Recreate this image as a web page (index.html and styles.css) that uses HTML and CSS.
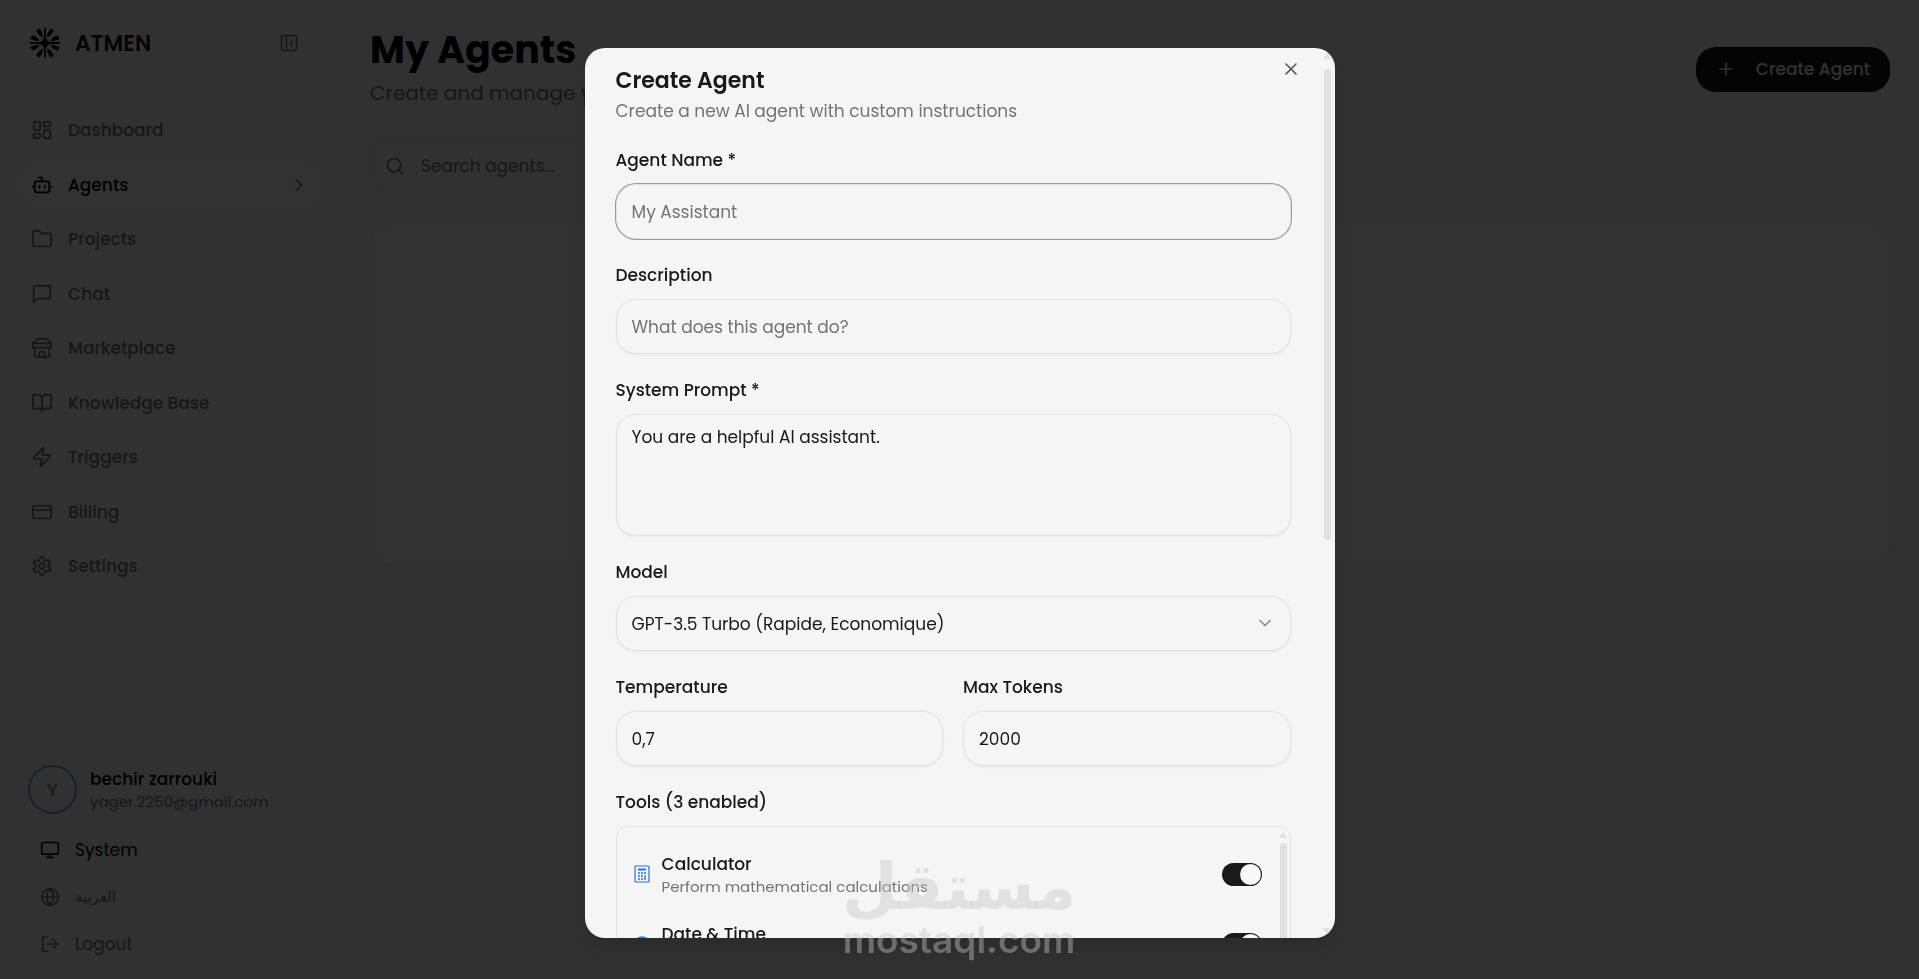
FILE: index.html
```
<!DOCTYPE html>
<html lang="en">
<head>
<meta charset="UTF-8">
<meta name="viewport" content="width=device-width, initial-scale=1.0">
<title>My Agents - ATMEN</title>
<link rel="stylesheet" href="styles.css">
</head>
<body>

<div class="app">
  <aside class="sidebar">
    <div class="sidebar-header">
      <svg class="logo" viewBox="0 0 30 30" fill="none" stroke="currentColor">
        <path d="M15 0v30M0 15h30" stroke-width="1.8"/>
        <path d="M15 8l2.500 4.500L22 15l-4.500 2.500L15 22l-2.500-4.500L8 15l4.500-2.500z" fill="currentColor" stroke="none"/>
        <g fill="currentColor" stroke="none">
          <path d="M16.800 9.500C17 6 18.500 3 20.500 0.500L24 2C22.500 5 20.500 8.500 16.800 9.500z"/>
          <path d="M20.500 13.200C24 13 27 12 29.700 11L28 7.500C25 8 21.500 9.500 20.500 13.200z"/>
          <path d="M13.200 9.500C13 6 11.500 3 9.500 0.500L6 2C7.500 5 9.500 8.500 13.200 9.500z"/>
          <path d="M9.500 13.200C6 13 3 12 0.300 11L2 7.500C5 8 8.500 9.500 9.500 13.200z"/>
          <path d="M16.800 20.500C17 24 18.500 27 20.500 29.500L24 28C22.500 25 20.500 21.500 16.800 20.500z"/>
          <path d="M20.500 16.800C24 17 27 18 29.700 19L28 22.500C25 22 21.500 20.500 20.500 16.800z"/>
          <path d="M13.200 20.500C13 24 11.500 27 9.500 29.500L6 28C7.500 25 9.500 21.500 13.200 20.500z"/>
          <path d="M9.500 16.800C6 17 3 18 0.300 19L2 22.500C5 22 8.500 20.500 9.500 16.800z"/>
        </g>
      </svg>
      <span class="brand">ATMEN</span>
      <button class="icon-btn" aria-label="Collapse sidebar">
        <svg class="icon icon-md" viewBox="0 0 24 24"><rect x="3" y="3" width="18" height="18" rx="2"/><path d="M9 3v18M16 15l-3-3 3-3"/></svg>
      </button>
    </div>

    <nav class="nav">
      <a class="nav-item" href="#"><svg class="icon" viewBox="0 0 24 24"><rect x="3" y="3" width="7" height="9" rx="1"/><rect x="14" y="3" width="7" height="5" rx="1"/><rect x="14" y="12" width="7" height="9" rx="1"/><rect x="3" y="16" width="7" height="5" rx="1"/></svg>Dashboard</a>
      <a class="nav-item active" href="#"><svg class="icon" viewBox="0 0 24 24"><path d="M12 8V4H8"/><rect x="4" y="8" width="16" height="12" rx="2"/><path d="M2 14h2M20 14h2M15 13v2M9 13v2"/></svg>Agents<svg class="icon icon-md chevron" viewBox="0 0 24 24"><path d="M9 18l6-6-6-6"/></svg></a>
      <a class="nav-item" href="#"><svg class="icon" viewBox="0 0 24 24"><path d="M20 20a2 2 0 0 0 2-2V8a2 2 0 0 0-2-2h-7.900a2 2 0 0 1-1.690-.9L9.600 3.900A2 2 0 0 0 7.930 3H4a2 2 0 0 0-2 2v13a2 2 0 0 0 2 2Z"/></svg>Projects</a>
      <a class="nav-item" href="#"><svg class="icon" viewBox="0 0 24 24"><path d="M21 15a2 2 0 0 1-2 2H7l-4 4V5a2 2 0 0 1 2-2h14a2 2 0 0 1 2 2z"/></svg>Chat</a>
      <a class="nav-item" href="#"><svg class="icon" viewBox="0 0 24 24"><path d="m2 7 4.410-4.410A2 2 0 0 1 7.830 2h8.340a2 2 0 0 1 1.420.590L22 7"/><path d="M4 12v8a2 2 0 0 0 2 2h12a2 2 0 0 0 2-2v-8"/><path d="M15 22v-4a2 2 0 0 0-2-2h-2a2 2 0 0 0-2 2v4"/><path d="M2 7h20"/><path d="M22 7v3a2 2 0 0 1-2 2 2.700 2.700 0 0 1-1.590-.630.700.700 0 0 0-.820 0A2.700 2.700 0 0 1 16 12a2.700 2.700 0 0 1-1.590-.630.700.700 0 0 0-.820 0A2.700 2.700 0 0 1 12 12a2.700 2.700 0 0 1-1.590-.630.700.700 0 0 0-.820 0A2.700 2.700 0 0 1 8 12a2.700 2.700 0 0 1-1.590-.630.700.700 0 0 0-.820 0A2.700 2.700 0 0 1 4 12a2 2 0 0 1-2-2V7"/></svg>Marketplace</a>
      <a class="nav-item" href="#"><svg class="icon" viewBox="0 0 24 24"><path d="M12 7v14"/><path d="M3 18a1 1 0 0 1-1-1V4a1 1 0 0 1 1-1h5a4 4 0 0 1 4 4 4 4 0 0 1 4-4h5a1 1 0 0 1 1 1v13a1 1 0 0 1-1 1h-6a3 3 0 0 0-3 3 3 3 0 0 0-3-3z"/></svg>Knowledge Base</a>
      <a class="nav-item" href="#"><svg class="icon" viewBox="0 0 24 24"><path d="M4 14a1 1 0 0 1-.780-1.630l9.900-10.200a.5.5 0 0 1 .860.460l-1.920 6.020A1 1 0 0 0 13 10h7a1 1 0 0 1 .780 1.630l-9.900 10.200a.5.5 0 0 1-.860-.460l1.920-6.020A1 1 0 0 0 11 14z"/></svg>Triggers</a>
      <a class="nav-item" href="#"><svg class="icon" viewBox="0 0 24 24"><rect x="2" y="5" width="20" height="14" rx="2"/><path d="M2 10h20"/></svg>Billing</a>
      <a class="nav-item" href="#"><svg class="icon" viewBox="0 0 24 24"><path d="M12.220 2h-.440a2 2 0 0 0-2 2v.180a2 2 0 0 1-1 1.730l-.430.250a2 2 0 0 1-2 0l-.150-.080a2 2 0 0 0-2.730.730l-.220.380a2 2 0 0 0 .730 2.730l.150.100a2 2 0 0 1 1 1.720v.510a2 2 0 0 1-1 1.740l-.150.090a2 2 0 0 0-.730 2.730l.220.380a2 2 0 0 0 2.730.730l.150-.080a2 2 0 0 1 2 0l.430.250a2 2 0 0 1 1 1.730V20a2 2 0 0 0 2 2h.440a2 2 0 0 0 2-2v-.180a2 2 0 0 1 1-1.730l.430-.250a2 2 0 0 1 2 0l.150.080a2 2 0 0 0 2.730-.730l.220-.390a2 2 0 0 0-.730-2.730l-.150-.080a2 2 0 0 1-1-1.740v-.5a2 2 0 0 1 1-1.740l.150-.090a2 2 0 0 0 .730-2.730l-.220-.380a2 2 0 0 0-2.730-.730l-.150.080a2 2 0 0 1-2 0l-.430-.250a2 2 0 0 1-1-1.730V4a2 2 0 0 0-2-2z"/><circle cx="12" cy="12" r="3"/></svg>Settings</a>
    </nav>

    <div class="sidebar-footer">
      <div class="user">
        <span class="avatar">Y</span>
        <div>
          <div class="user-name">bechir zarrouki</div>
          <div class="user-email">yager.2250@gmail.com</div>
        </div>
      </div>
      <button class="foot-item strong"><svg class="icon icon-md" viewBox="0 0 24 24"><rect x="2" y="3" width="20" height="14" rx="2"/><path d="M8 21h8M12 17v4"/></svg>System</button>
      <button class="foot-item arabic" lang="ar"><svg class="icon icon-md" viewBox="0 0 24 24"><circle cx="12" cy="12" r="10"/><path d="M12 2a14.500 14.500 0 0 0 0 20 14.500 14.500 0 0 0 0-20M2 12h20"/></svg>العربية</button>
      <button class="foot-item"><svg class="icon icon-md" viewBox="0 0 24 24"><path d="M9 21H5a2 2 0 0 1-2-2V5a2 2 0 0 1 2-2h4M16 17l5-5-5-5M21 12H9"/></svg>Logout</button>
    </div>
  </aside>

  <main class="main">
    <header class="page-header">
      <div>
        <h1>My Agents</h1>
        <p class="subtitle">Create and manage your AI agents</p>
      </div>
      <button class="btn-primary"><svg class="icon icon-md" viewBox="0 0 24 24"><path d="M5 12h14M12 5v14"/></svg>Create Agent</button>
    </header>
    <label class="search">
      <svg class="icon icon-md" viewBox="0 0 24 24"><circle cx="11" cy="11" r="8"/><path d="m21 21-4.300-4.300"/></svg>
      <input type="search" placeholder="Search agents..." aria-label="Search agents">
    </label>
    <section class="card"></section>
  </main>
</div>

<div class="overlay">
  <div class="modal" role="dialog" aria-modal="true" aria-labelledby="modal-title">
    <form class="modal-body">
      <div class="modal-header">
        <h2 id="modal-title">Create Agent</h2>
        <p>Create a new AI agent with custom instructions</p>
      </div>

      <div class="field">
        <label for="name">Agent Name *</label>
        <input class="control focused" id="name" type="text" placeholder="My Assistant">
      </div>
      <div class="field">
        <label for="description">Description</label>
        <input class="control" id="description" type="text" placeholder="What does this agent do?">
      </div>
      <div class="field">
        <label for="prompt">System Prompt *</label>
        <textarea class="control" id="prompt">You are a helpful AI assistant.</textarea>
      </div>
      <div class="field">
        <label for="model">Model</label>
        <div class="select-wrap">
          <select class="control" id="model">
            <option>GPT-3.5 Turbo (Rapide, Economique)</option>
          </select>
          <svg class="icon icon-md select-arrow" viewBox="0 0 24 24"><path d="m6 9 6 6 6-6"/></svg>
        </div>
      </div>
      <div class="field-row">
        <div class="field">
          <label for="temperature">Temperature</label>
          <input class="control" id="temperature" type="text" inputmode="decimal" value="0,7">
        </div>
        <div class="field">
          <label for="tokens">Max Tokens</label>
          <input class="control" id="tokens" type="text" inputmode="numeric" value="2000">
        </div>
      </div>

      <div class="field">
        <span class="field-title">Tools (3 enabled)</span>
        <div class="tools">
          <div class="tool">
            <svg class="tool-icon" viewBox="0 0 16 18" fill="none" stroke="currentColor">
              <rect x="1" y="1" width="14" height="16" rx="1" stroke-width="1.200"/>
              <path d="M4 4.500h8" stroke-width="2"/>
              <path d="M4 8h2M7 8h2M10 8h2M4 11h2M7 11h2M4 14h2M7 14h2M11 10.500V15" stroke-width="1.500"/>
            </svg>
            <div class="tool-text">
              <label for="calc">Calculator</label>
              <p>Perform mathematical calculations</p>
            </div>
            <input class="switch" id="calc" type="checkbox" checked>
          </div>
          <div class="tool">
            <svg class="tool-icon" viewBox="0 0 16 18" fill="none" stroke="currentColor" stroke-width="1.500"><circle cx="8" cy="9" r="7"/><path d="M8 5v4l3 2"/></svg>
            <div class="tool-text">
              <label for="date">Date &amp; Time</label>
              <p>Get current date and time</p>
            </div>
            <input class="switch" id="date" type="checkbox" checked>
          </div>
          <div class="tools-scroll"><span class="arrow-up"></span><span class="thumb"></span></div>
        </div>
      </div>
    </form>

    <button class="modal-close" aria-label="Close"><svg class="icon icon-md" viewBox="0 0 24 24"><path d="M18 6 6 18M6 6l12 12"/></svg></button>
    <div class="modal-scroll"><span class="arrow-up"></span><span class="thumb"></span><span class="arrow-down"></span></div>
  </div>
</div>

<div class="watermark">
  <span class="wm-ar" lang="ar">مستقل</span>
  <span class="wm-en">mostaql.com</span>
</div>

</body>
</html>
```
FILE: styles.css
```
*, *::before, *::after { box-sizing: border-box; margin: 0; padding: 0; }
body {
  background: #f5f5f5;
  color: #1a1818;
  font-family: 'Poppins', Inter, 'Noto Sans', sans-serif;
  font-size: 17px;
  overflow: hidden;
}
button, input, textarea, select { font: inherit; color: inherit; }
button { background: none; border: none; cursor: pointer; }
a { color: inherit; text-decoration: none; }

.icon {
  width: 22px; height: 22px;
  fill: none;
  stroke: currentColor;
  stroke-width: 2;
  stroke-linecap: round;
  stroke-linejoin: round;
  flex-shrink: 0;
}
.icon-md { width: 20px; height: 20px; }

/* layout */
.app { display: flex; height: 100vh; }
.sidebar {
  width: 340px;
  flex-shrink: 0;
  display: flex;
  flex-direction: column;
  border-right: 1px solid #ededed;
}
.sidebar-header {
  height: 89px;
  padding: 0 40px 2px 30px;
  display: flex;
  align-items: center;
  gap: 15px;
  border-bottom: 1px solid #e5e5e5;
}
.logo { width: 30px; height: 30px; }
.brand { font-size: 22px; font-weight: 600; }
.icon-btn { margin-left: auto; display: flex; color: #737373; }

.nav {
  height: 503px;
  padding: 15px 15px 0;
  display: flex;
  flex-direction: column;
  justify-content: space-between;
}
.nav-item {
  height: 52px;
  padding: 0 14px 0 15px;
  display: flex;
  align-items: center;
  gap: 15px;
  border: 1px solid transparent;
  border-radius: 22px;
  color: #737373;
  font-weight: 500;
}
.nav-item.active { color: #000; background: #fafafa; border-color: #ededed; }
.chevron { margin-left: auto; color: #737373; }

.sidebar-footer {
  margin-top: auto;
  padding: 18px 28px 12px;
  border-top: 1px solid #ededed;
}
.user { display: flex; align-items: center; gap: 13px; margin-bottom: 12px; }
.avatar {
  width: 49px; height: 49px;
  display: flex; align-items: center; justify-content: center;
  border: 2px solid #7aa0d2;
  border-radius: 50%;
  color: #7aa0d2;
  font-weight: 700;
}
.user-name { line-height: 24px; font-weight: 500; color: #000; }
.user-email { line-height: 22px; font-size: 15px; color: #737373; }
.foot-item {
  width: 100%; height: 47px;
  padding: 0 12px;
  display: flex; align-items: center;
  gap: 15px;
  color: #737373;
}
.foot-item.strong { color: #000; }
.foot-item.arabic { font-family: 'DejaVu Sans', sans-serif; font-size: 15px; }

.main { flex: 1; padding: 28px 29px 30px 30px; }
.page-header { display: flex; justify-content: space-between; align-items: center; }
h1 { font-size: 38px; line-height: 44px; font-weight: 700; color: #000; }
.subtitle { margin-top: 4px; font-size: 20px; line-height: 34px; color: #737373; }
.btn-primary {
  height: 45px;
  padding: 0 20px;
  display: flex; align-items: center;
  gap: 20px;
  background: #1a1818;
  color: #f5f5f5;
  border-radius: 20px;
  font-weight: 500;
}
.search {
  max-width: 504px; height: 55px;
  margin: 28px 0 30px;
  padding: 0 14px;
  display: flex; align-items: center;
  gap: 16px;
  border: 1px solid #e5e5e5;
  border-radius: 20px;
  color: #737373;
}
.search input { flex: 1; background: none; border: none; outline: none; }
.card { height: 342px; border: 1px solid #e5e5e5; border-radius: 20px; background: #f7f7f7; }
::placeholder { color: #737373; opacity: 1; }

/* dialog */
.overlay {
  position: fixed; inset: 0;
  padding: 48px 16px 41px;
  display: flex;
  justify-content: center;
  background: rgba(0, 0, 0, 0.8);
}
.modal {
  width: 100%; max-width: 750px;
  position: relative;
  overflow: hidden;
  background: #f5f5f5;
  border-radius: 20px;
  box-shadow: 0 10px 20px rgba(0, 0, 0, 0.15);
}
.modal-body {
  padding: 16px 44px 0 31px;
  display: flex;
  flex-direction: column;
  gap: 21px;
}
.modal-header h2 { font-size: 22px; line-height: 34px; font-weight: 600; }
.modal-header p { line-height: 26px; color: #737373; }
.modal-close { position: absolute; top: 11px; right: 34px; display: flex; color: #555; }

.field { display: flex; flex-direction: column; gap: 9px; }
.field > label, .field-title { line-height: 30px; font-weight: 500; }
.field-row { display: grid; grid-template-columns: 1fr 1fr; gap: 20px; }
.control {
  width: 100%; height: 55px;
  padding: 0 15px;
  background: #f5f5f5;
  border: 1px solid #e2e2e2;
  border-radius: 20px;
  box-shadow: 0 1px 3px rgba(0, 0, 0, 0.06);
  outline: none;
  appearance: none;
}
.control.focused { box-shadow: 0 0 0 1px #999; }
textarea.control { display: block; height: 122px; padding: 8px 15px; line-height: 28px; resize: none; }
.select-wrap { position: relative; }
.select-arrow { position: absolute; right: 16px; top: 17px; color: #8a8a8a; pointer-events: none; }

.tools {
  position: relative;
  height: 300px;
  padding: 12px 28px 12px 16px;
  border: 1px solid #e2e2e2;
  border-radius: 12px;
}
.tool { display: flex; align-items: center; gap: 11px; padding: 12px 0; }
.tool-icon { width: 18px; height: 18px; color: #2f6fdb; }
.tool-text { flex: 1; }
.tool-text label { display: block; line-height: 26px; font-weight: 500; }
.tool-text p { font-size: 15px; line-height: 20px; color: #737373; }
.switch {
  width: 40px; height: 23px;
  appearance: none;
  display: flex;
  justify-content: flex-end;
  padding: 1px;
  background: #1a1818;
  border-radius: 12px;
  cursor: pointer;
}
.switch::before { content: ''; width: 21px; height: 21px; border-radius: 50%; background: #f8f8f8; }

/* scrollbars */
.modal-scroll, .tools-scroll {
  position: absolute;
  top: 5px; bottom: 4px; right: 4px;
  width: 7px;
  display: flex;
  flex-direction: column;
  align-items: center;
  gap: 5px;
}
.tools-scroll { right: 3px; }
.thumb { width: 7px; height: 300px; border-radius: 4px; background: #e1e1e1; }
.modal-scroll .thumb { height: 471px; margin-top: 5px; }
.arrow-up, .arrow-down { border: 4px solid transparent; }
.arrow-up { border-top: 0; border-bottom: 6px solid #e1e1e1; }
.arrow-down { margin-top: auto; border-bottom: 0; border-top: 6px solid #e1e1e1; }

.watermark {
  position: fixed;
  left: 0; right: 0; bottom: 16px;
  padding-right: 1px;
  display: flex;
  flex-direction: column;
  align-items: center;
  color: rgba(197, 197, 197, 0.42);
  pointer-events: none;
}
.wm-ar { font-family: 'DejaVu Sans', sans-serif; font-size: 64px; line-height: 60px; font-weight: 700; }
.wm-en { font-family: Inter, sans-serif; font-size: 37px; line-height: 46px; font-weight: 600; }
```
